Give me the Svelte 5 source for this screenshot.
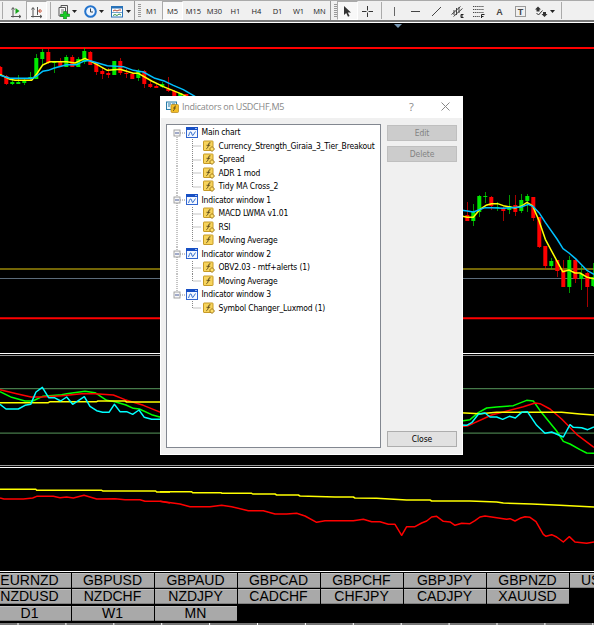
<script lang="ts">
	type Candle = [x: number, high: number, low: number, top: number, bottom: number, up: number];
	type Node = { label: string; root?: boolean; custom?: boolean; lastRoot?: boolean; lastChild?: boolean };

	const timeframes = ['M1', 'M5', 'M15', 'M30', 'H1', 'H4', 'D1', 'W1', 'MN'];
	const tools = ['vline', 'hline', 'trend', 'channel', 'fibo', 'text', 'label'];

	const nodes: Node[] = [
		{ label: 'Main chart', root: true },
		{ label: 'Currency_Strength_Giraia_3_Tier_Breakout', custom: true },
		{ label: 'Spread', custom: true },
		{ label: 'ADR 1 mod', custom: true },
		{ label: 'Tidy MA Cross_2', custom: true, lastChild: true },
		{ label: 'Indicator window 1', root: true },
		{ label: 'MACD LWMA v1.01', custom: true },
		{ label: 'RSI', custom: true },
		{ label: 'Moving Average', lastChild: true },
		{ label: 'Indicator window 2', root: true },
		{ label: 'OBV2.03 - mtf+alerts (1)', custom: true },
		{ label: 'Moving Average', lastChild: true },
		{ label: 'Indicator window 3', root: true, lastRoot: true },
		{ label: 'Symbol Changer_Luxmod (1)', custom: true, lastRoot: true, lastChild: true }
	];

	const symbols = [
		['EURNZD', 'GBPUSD', 'GBPAUD', 'GBPCAD', 'GBPCHF', 'GBPJPY', 'GBPNZD', 'USDCAD'],
		['NZDUSD', 'NZDCHF', 'NZDJPY', 'CADCHF', 'CHFJPY', 'CADJPY', 'XAUUSD'],
		['D1', 'W1', 'MN']
	];

	const candles: Candle[] = [
		[0, 66, 76, 67, 76, 0],
		[6, 75, 85, 76, 84, 0],
		[12, 80, 85, 82, 84, 1],
		[18, 75, 84, 82, 84, 1],
		[24, 79, 85, 81, 83, 1],
		[30, 72, 80, 77, 79, 1],
		[36, 54, 79, 58, 79, 1],
		[42, 49, 64, 52, 59, 1],
		[48, 49, 64, 52, 63, 0],
		[54, 61, 73, 62, 63, 1],
		[60, 58, 67, 62, 66, 0],
		[66, 55, 67, 57, 67, 1],
		[72, 55, 67, 57, 67, 0],
		[78, 57, 67, 59, 67, 1],
		[84, 48, 64, 51, 62, 1],
		[90, 51, 65, 52, 65, 0],
		[96, 62, 75, 63, 72, 0],
		[102, 67, 79, 71, 74, 0],
		[108, 68, 78, 73, 75, 0],
		[114, 61, 75, 61, 75, 1],
		[120, 58, 75, 61, 73, 0],
		[126, 69, 78, 73, 74, 0],
		[132, 73, 79, 74, 79, 0],
		[138, 69, 81, 71, 78, 1],
		[144, 70, 88, 71, 84, 0],
		[150, 80, 88, 84, 87, 0],
		[156, 83, 88, 86, 88, 0],
		[162, 82, 88, 84, 87, 1],
		[168, 77, 92, 89, 91, 0],
		[174, 90, 96, 91, 96, 0],
		[180, 93, 97, 93, 97, 1],
		[186, 94, 98, 94, 98, 0],
		[467, 202, 221, 215, 221, 0],
		[473, 204, 226, 212, 221, 1],
		[479, 195, 217, 196, 212, 1],
		[485, 192, 203, 196, 197, 1],
		[491, 196, 210, 197, 206, 0],
		[497, 202, 211, 207, 208, 1],
		[503, 207, 221, 208, 211, 0],
		[509, 195, 214, 206, 210, 1],
		[515, 195, 216, 205, 212, 0],
		[521, 194, 213, 200, 211, 1],
		[527, 194, 212, 196, 201, 1],
		[533, 197, 221, 197, 218, 0],
		[539, 217, 248, 217, 247, 0],
		[545, 246, 269, 246, 266, 0],
		[551, 258, 269, 261, 266, 1],
		[557, 260, 277, 260, 271, 0],
		[563, 260, 287, 270, 287, 0],
		[569, 256, 293, 260, 287, 1],
		[575, 259, 283, 260, 279, 0],
		[581, 266, 290, 274, 279, 1],
		[587, 272, 307, 273, 287, 0],
		[593, 263, 287, 277, 286, 1]
	];

	const tabTicks = Array.from({ length: 13 }, (_, i) => 18 + i * 47.9);
</script>

{#snippet caret()}
	<svg class="caret" width="5" height="3" viewBox="0 0 5 3"><path d="M0 0h5L2.5 3z" fill="#222" /></svg>
{/snippet}

{#snippet toolIcon(name: string)}
	<svg width="15" height="15" viewBox="0 0 15 15" fill="none" stroke="#444">
		{#if name === 'vline'}
			<path d="M7.5 3v9" stroke="#666" />
		{:else if name === 'hline'}
			<path d="M3 7.5h9" />
		{:else if name === 'trend'}
			<path d="M3 12l9-9" />
		{:else if name === 'channel'}
			<path d="M1.5 10.5l9-8M3.5 12.5l9-8M4 6v5M6.5 4v7M9 3v6" />
			<path d="M13.5 10.5h-2.5v3h2.5M11 12h2" stroke="#222" />
		{:else if name === 'fibo'}
			<path d="M2 2.5h11M2 5.5h11M2 8.5h11M2 12.5h7" stroke-dasharray="1.3 .8" />
			<path d="M10.5 14v-3.500h3M10.500 12.500h2" stroke="#222" />
		{:else if name === 'text'}
			<text x="7.500" y="11" class="glyph">A</text>
		{:else}
			<rect x="2.500" y="2.500" width="10" height="10" stroke-dasharray="1 1" />
			<text x="7.500" y="11" class="glyph">T</text>
		{/if}
	</svg>
{/snippet}

<div class="terminal">
	<header class="toolbar">
		<span class="divider first"></span>
		<span class="cell">
			<svg width="15" height="15" viewBox="0 0 15 15" fill="none">
				<path d="M5 4v9.500M3 12.500h10M3.500 5.500L5 3.500l1.500 2M11 11l2 1.500-2 1.500" stroke="#555" />
				<path d="M7.500 4l4 3-4 3z" fill="#18a41c" />
			</svg>
		</span>
		<span class="cell pressed">
			<svg width="15" height="15" viewBox="0 0 15 15" fill="none">
				<path d="M4 4v9.500M2 12.500h11M2.500 5.500L4 3.500l1.500 2M11 11l2 1.500-2 1.500M8.500 3v8" stroke="#555" />
				<path d="M13 7h-3M11.500 5L9.500 7l2 2" stroke="#c84426" />
			</svg>
		</span>
		<span class="divider"></span>
		<span class="cell wide">
			<svg width="15" height="15" viewBox="0 0 15 15">
				<path d="M5 1.500h6.500v9H5z" fill="#eee" stroke="#555" />
				<path d="M3 3.500h6.500v8.500H3z" fill="#f8f8f8" stroke="#555" />
				<path d="M5 6h3M5 8h2" stroke="#777" />
				<path d="M7.500 7.500h3v2.500h3v2.500h-3v2.500h-3v-2.500H4.500V10h3z" fill="#16cc24" stroke="#087d12" stroke-width=".6" />
			</svg>
			{@render caret()}
		</span>
		<span class="cell wide">
			<svg width="15" height="15" viewBox="0 0 15 15">
				<circle cx="7.500" cy="7.500" r="5.300" fill="#edf5ff" stroke="#2474cd" stroke-width="2" />
				<path d="M7.500 4.500V8H10" fill="none" stroke="#345" />
			</svg>
			{@render caret()}
		</span>
		<span class="cell wide">
			<svg width="15" height="15" viewBox="0 0 15 15">
				<rect x="1.500" y="2.500" width="11" height="10.500" fill="#fff" stroke="#2872b8" />
				<path d="M1 3.500h12" stroke="#2872b8" stroke-width="2" />
				<path d="M2 8.500h10" stroke="#73a2c7" />
				<path d="M3 7l2-1 2 1 2-1 2 0" fill="none" stroke="#b34b32" />
				<path d="M3 11.500l2-1 2 1 2-1.500 2 1" fill="none" stroke="#32934b" />
			</svg>
			{@render caret()}
		</span>
		<span class="grip"></span>
		{#each timeframes as tf}
			<span class="cell tf" class:pressed={tf === 'M5'}>{tf}</span>
		{/each}
		<span class="grip"></span>
		<span class="cell pressed">
			<svg width="15" height="15" viewBox="0 0 15 15">
				<path d="M4 2v9l2.200-2 1.800 3.700 1.600-.8-1.800-3.400H11z" fill="#333" />
			</svg>
		</span>
		<span class="cell">
			<svg width="15" height="15" viewBox="0 0 15 15" stroke="#333">
				<path d="M6.500 2v4.500M6.500 8.500V13M1 7.500h4.500M7.500 7.500H12" />
			</svg>
		</span>
		<span class="divider mid"></span>
		{#each tools as tool}
			<span class="cell">{@render toolIcon(tool)}</span>
		{/each}
		<span class="cell wide">
			<svg width="15" height="15" viewBox="0 0 15 15" fill="#333">
				<path d="M4 2.500l3 3H5.500v2h-3v-2H1zM10.500 13l-3-3H9V8h3v2h1.500z" />
				<path d="M2.500 9l2 2 4-4.500" fill="none" stroke="#333" />
			</svg>
			{@render caret()}
		</span>
		<span class="divider"></span>
	</header>

	<main class="charts">
		<svg width="594" height="548" viewBox="0 24 594 548">
			<path d="M394 24h8l-4 4z" fill="#7898b4" />

			<!-- price levels -->
			<path d="M0 269h594" stroke="#9a8808" stroke-width="1.600" />
			<path d="M0 278.500h594" stroke="#5c6b7a" />
			<path d="M0 48h594M0 318.300h594" stroke="#f00" stroke-width="2" />

			{#each candles as [x, high, low, top, bottom, up]}
				<g fill={up ? '#00e800' : '#f00'}>
					<rect x={x} y={high} width="1" height={low - high} opacity=".65" />
					<rect x={x - 1.7} y={top} width="4" height={bottom - top} />
				</g>
			{/each}

			<g class="series" transform="translate(0 30) scale(.33333)">
				<path class="yellow" d="M0 133L30 148 45 151H95L110 132 128 105 150 95H200L225 99 255 85 290 103 322 121 360 118 400 130H415L455 153 490 170 540 190 560 200" />
				<path class="blue" d="M0 136L30 145H97L110 138 128 124 145 121 163 114 200 104H230L255 92 270 92 322 107 370 110 400 121 430 126 465 145 495 154 520 166 550 179 590 202" />
			</g>
			<g class="series" transform="translate(460 180) scale(.33333)">
				<path class="yellow" d="M0 107L22 112H40L60 88 78 76 95 71H113L130 77 165 84 185 78 201 67 218 78 237 122 256 178 308 275 327 270 345 279H360L382 292 402 296" />
				<path class="blue" d="M0 90L22 93 40 96 75 83H95L130 85 183 81 205 73 220 80 237 98 256 127 291 177 309 206 327 219 350 239 382 272 402 283" />
			</g>

			<!-- window borders -->
			<path d="M0 353.500h594M0 467.500h594M0 571.500h594" stroke="#fff" />
			<path d="M0 355.500h594M0 465.500h594" stroke="#999" />

			<path d="M0 388.700h594M0 433.200h594" stroke="#467a4a" stroke-width="1.300" />
			<g class="series" transform="translate(0 345) scale(.33333)">
				<path class="green" d="M0 140L35 157 75 168H98L128 154 185 149 200 146 255 139 285 143 320 166 345 170 378 180 400 190 418 192 455 209 482 217" />
				<path class="red" d="M0 134L50 146 93 156H125L185 152 245 146H285L340 150 375 164 430 181 482 202" />
				<path class="yellow" d="M0 173H145L150 170H290L294 168H375L380 171H482" />
				<path class="cyan" d="M0 178L18 192H55L75 181 92 178 108 141 127 127 146 158H163L182 168 200 156 218 178 235 167 253 155 270 184 290 197 308 202H327L343 178 360 200H380L398 208 417 195 433 217 455 223H482" />
				<path class="yellow" d="M0 433H108L110 436H305L308 438H467L470 441H510" />
				<path class="red" d="M0 459L12 462H70L98 459 110 454H160L180 458 200 456 220 459 252 451 290 462 345 461 375 464H420L435 469H480L510 474" />
			</g>
			<g class="series" transform="translate(370 345) scale(.33333)">
				<path class="green" d="M270 229L300 224 325 203 350 189 380 186 430 182 470 166 490 168 514 202 560 258 580 289 600 297 630 314 650 324 672 325" />
				<path class="red" d="M270 245L295 242 365 210 460 185 495 174 510 176 540 192 575 222 620 268 672 307" />
				<path class="yellow" d="M270 203L330 206 380 202H575L630 207 672 210" />
				<path class="cyan" d="M270 240L290 241 305 233 325 208 345 204 360 216H380L398 223 418 214 436 219 455 202 472 200 500 241 525 265 545 261 580 276 600 239 610 247 635 248 653 254 672 246" />
			</g>
			<g class="series" transform="translate(160 420) scale(.33333)">
				<path class="yellow" d="M0 215H95L98 218H183L186 220H275L278 222H345L350 225H415L420 228 525 231H580L585 234 650 235 740 240H810L815 243H930L1010 246 1030 249 1115 252 1200 256 1302 261" />
				<path class="red" d="M0 244L60 252 90 260H150L185 256 215 260 265 272H310L345 282H380L410 280 435 288 470 307 495 302H580L610 298 635 305H660L685 313H705L725 346 740 320H765L785 309 800 303 815 291 830 289 850 304 870 306 885 316 905 310 930 311 945 302 960 291 975 288 1040 298 1050 296 1065 303 1080 295 1095 290 1110 292 1128 305 1150 343 1158 349 1175 344 1190 351 1210 366 1228 350 1245 366 1280 370 1302 366" />
			</g>
		</svg>

		<section class="dialog">
			<div class="titlebar">
				<svg width="13" height="12" viewBox="0 0 13 12">
					<rect x=".5" y="1" width="10" height="7.500" fill="#e9f4fb" stroke="#287ca8" />
					<path d="M2 3h3M2 5h2M6 3h3" stroke="#287ca8" />
					<rect x="5" y="3.500" width="7.500" height="8" rx="1" fill="#f2bd27" stroke="#b38417" stroke-width=".7" />
					<path d="M10 5q-1.500-.5-1.500 2t-1.500 3M7 7h3" fill="none" stroke="#594718" stroke-width=".8" />
				</svg>
				<span class="title">Indicators on USDCHF,M5</span>
				<span class="help">?</span>
				<svg width="9" height="9" viewBox="0 0 9 9"><path d="M.5.5l8 8M8.500.5l-8 8" stroke="#888" /></svg>
			</div>
			<div class="dialog-body">
				<div class="tree">
					{#each nodes as node, i}
						<div class="node">
							{#if node.root}
								<svg width="19" height="13.500" viewBox="0 0 19 13.500" fill="none" stroke="#888">
									<path d={i === 0 ? 'M10 7v7' : node.lastRoot ? 'M10 0v7' : 'M10 0v14'} stroke-dasharray="1 1" />
									<path d="M13 7h6" stroke-dasharray="1 1" />
									<rect x="7" y="4" width="6" height="6" fill="#f8f8f8" stroke="#9a9a9a" stroke-width=".9" />
									<path d="M8 7h4" stroke="#4a5c98" />
								</svg>
								<svg width="12" height="11" viewBox="0 0 12 11">
									<rect x=".5" y=".5" width="11" height="10" fill="#f4f8ff" stroke="#3165cf" />
									<path d="M0 1.500h12" stroke="#174fc4" stroke-width="3" />
									<path d="M9 1.500h2" stroke="#9bbcf5" />
									<path d="M2.500 9Q4.500 2.500 5.500 6T7 8.500 9.500 4.500" fill="none" stroke="#3973d0" />
								</svg>
							{:else}
								<svg width="36" height="13.500" viewBox="0 0 36 13.500" fill="none" stroke="#888" stroke-dasharray="1 1">
									{#if !node.lastRoot}
										<path d="M10 0v14" />
									{/if}
									<path d={node.lastChild ? 'M25.500 0v7H34' : 'M25.500 0v14M25.500 7H34'} />
								</svg>
								<svg width="12" height="12" viewBox="0 0 12 12">
									<rect x=".5" y="1" width="9.500" height="9.500" rx=".5" fill="#f7d45c" stroke="#c69a27" />
									<path d="M7.500 2.800Q5.700 2 5.500 5T3.300 8.800M3.500 5.300h3.700" fill="none" stroke="#59471b" stroke-width=".9" />
									{#if node.custom}
										<path d="M9 6.500L11.500 9 9 11.500 6.500 9z" fill="#ffe06b" stroke="#936b13" stroke-width=".9" />
									{/if}
								</svg>
							{/if}
							<span class="label">{node.label}</span>
						</div>
					{/each}
				</div>
				<div class="buttons">
					<button disabled>Edit</button>
					<button disabled>Delete</button>
					<button class="close">Close</button>
				</div>
			</div>
		</section>
	</main>

	<footer>
		{#each symbols as row}
			<div class="symbol-row">
				{#each row as symbol}
					<span class="symbol">{symbol}</span>
				{/each}
			</div>
		{/each}
		<svg class="tabs" width="594" height="2" viewBox="0 0 594 2">
			<path d="M0 1h594" stroke="#777" stroke-width="2" />
			{#each tabTicks as x}
				<path d="M{x} 0v2" stroke="#fff" />
			{/each}
		</svg>
	</footer>
</div>

<style>
	:global(body) {
		background: #000;
		overflow: hidden;
	}

	.terminal {
		width: 594px;
		height: 625px;
		display: flex;
		flex-direction: column;
		overflow: hidden;
		background: #000;
		font-family: 'DejaVu Sans Condensed', 'DejaVu Sans', sans-serif;
	}

	svg {
		display: block;
		flex-shrink: 0;
	}

	.toolbar {
		box-sizing: border-box;
		height: 22px;
		flex-shrink: 0;
		display: flex;
		align-items: center;
		background: #f0f0f0;
		border-top: 1px solid #aaa;
		border-bottom: 2px solid #777;
		box-shadow: 0 1px 0 #fff;
	}

	.cell {
		box-sizing: border-box;
		width: 21px;
		height: 19px;
		flex-shrink: 0;
		display: flex;
		align-items: center;
		justify-content: center;
		padding: 1px 1px 0 0;
	}

	.cell.wide {
		width: 27px;
		gap: 1px;
	}

	.cell.pressed {
		background: #f8f8f8;
		border: 1px solid #fff;
		border-top-color: #aaa;
		border-left-color: #aaa;
	}

	.cell.tf {
		font: 7.5px 'Open Sans', sans-serif;
		color: #222;
		padding: 1px 0 0;
	}

	.divider {
		box-sizing: border-box;
		width: 6px;
		height: 17px;
		border-left: 1px solid #aaa;
		margin-left: 3px;
		margin-right: -3px;
	}

	.divider.first {
		width: 3px;
		margin: 0 0 0 2px;
	}

	.divider.mid {
		width: 4px;
		margin: 0 -1px 0 2px;
	}

	.grip {
		box-sizing: border-box;
		width: 7px;
		height: 19px;
		border-left: 1px solid #999;
		background: repeating-linear-gradient(#999 0 1px, #f0f0f0 1px 2px) 3px 3px / 3px 14px no-repeat;
	}

	.glyph {
		font: bold 9px 'Liberation Sans', sans-serif;
		text-anchor: middle;
		fill: #444;
		stroke: none;
	}

	.charts {
		position: relative;
		height: 548px;
		padding-top: 2px;
		flex-shrink: 0;
		clip-path: inset(1px 0 0 0);
	}

	.series path {
		fill: none;
		stroke-width: 4.5;
		stroke-linejoin: round;
	}

	.series .yellow {
		stroke: #ff0;
	}

	.series .blue {
		stroke: #00c0ff;
	}

	.series .cyan {
		stroke: #0ff;
	}

	.series .green {
		stroke: #0f0;
	}

	.series .red {
		stroke: #f00;
	}

	.dialog {
		position: absolute;
		left: 160px;
		top: 74px;
		width: 303px;
		height: 359px;
		display: flex;
		flex-direction: column;
		background: #f0f0f0;
		box-shadow: inset 0 0 0 1px #fff;
	}

	.titlebar {
		box-sizing: border-box;
		height: 22px;
		display: flex;
		align-items: center;
		padding: 0 0 1px 6px;
		background: #fff;
		font: 9px 'Open Sans', sans-serif;
		color: #888;
	}

	.title {
		width: 227px;
		padding-left: 3px;
		letter-spacing: -0.25px;
		white-space: nowrap;
	}

	.help {
		width: 32px;
		font-size: 11px;
	}

	.dialog-body {
		flex: 1;
		display: flex;
		gap: 6px;
		padding: 6px 6px 7px;
	}

	.tree {
		box-sizing: border-box;
		width: 215px;
		padding-top: 0.5px;
		background: #fff;
		border: 1px solid #828790;
	}

	.node {
		height: 13.5px;
		display: flex;
		align-items: center;
		font-size: 8.5px;
		letter-spacing: -0.17px;
		color: #000;
		white-space: nowrap;
	}

	.label {
		padding-left: 3.5px;
	}

	.buttons {
		width: 70px;
		display: flex;
		flex-direction: column;
		gap: 5px;
		padding-top: 1px;
	}

	button {
		box-sizing: border-box;
		height: 16px;
		padding: 0;
		border: 1px solid #adadad;
		background: #e1e1e1;
		font: 8.5px 'DejaVu Sans Condensed', 'DejaVu Sans', sans-serif;
		letter-spacing: -0.1px;
		color: #000;
	}

	button:disabled {
		background: #ccc;
		border-color: #bfbfbf;
		color: #838383;
	}

	.close {
		margin-top: auto;
		margin-bottom: 1px;
	}

	footer {
		flex: 1;
		display: flex;
		flex-direction: column;
		padding-top: 1px;
	}

	.symbol-row {
		height: 16px;
		display: flex;
		margin-left: -11px;
	}

	.symbol-row:nth-child(3) {
		margin-top: 1px;
	}

	.symbol {
		box-sizing: border-box;
		width: 82px;
		height: 15px;
		margin-right: 1px;
		padding-right: 1px;
		flex-shrink: 0;
		background: #a9a9a9;
		border-top: 1px solid #c0c0c0;
		border-bottom: 1px solid #808080;
		font: 14px/13px 'Liberation Sans', Arial, sans-serif;
		text-align: center;
		color: #000;
	}

	.tabs {
		margin-top: auto;
	}
</style>
